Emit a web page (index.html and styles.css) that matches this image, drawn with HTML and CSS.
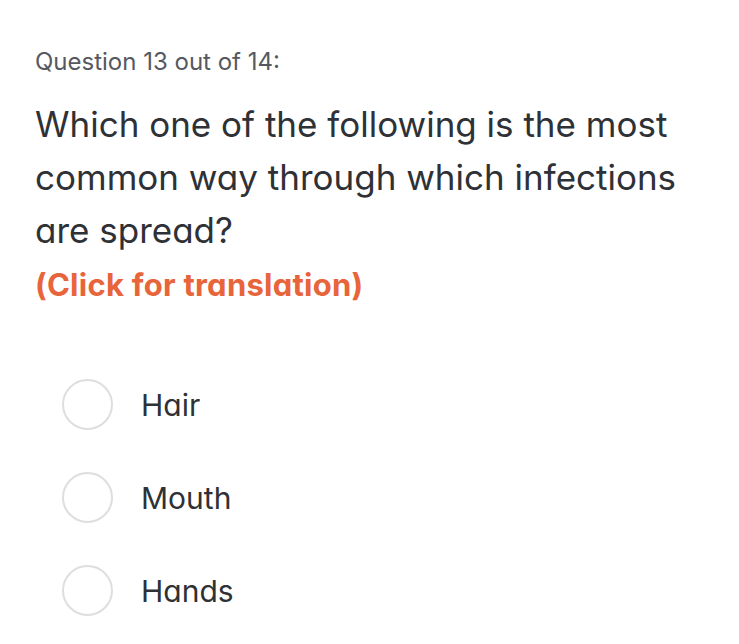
FILE: index.html
```html
<!DOCTYPE html>
<html>
<head>
<meta charset="utf-8">
<link rel="stylesheet" href="styles.css">
</head>
<body>
<main class="quiz">
  <div class="counter">Question 13 out of 14:</div>
  <h1 class="question">Which one of the following is the most common way through which infections are spread?</h1>
  <div class="translate">(Click for translation)</div>
  <ul class="options">
    <li class="option"><span class="radio"></span><span class="label">Hair</span></li>
    <li class="option"><span class="radio"></span><span class="label">Mouth</span></li>
    <li class="option"><span class="radio"></span><span class="label">Hands</span></li>
  </ul>
</main>
</body>
</html>
```

FILE: styles.css
```css
html, body {
  margin: 0;
  padding: 0;
  background: #ffffff;
}
body {
  font-family: Inter, "Noto Sans", sans-serif;
  font-feature-settings: "cv11" 1;
  color: #2e3136;
}
.quiz {
  padding: 44px 0 0 35px;
  width: 650px;
}
.counter {
  font-size: 24px;
  line-height: 36px;
  color: #55595f;
}
.question {
  margin: 18px 0 0 0;
  font-size: 35px;
  font-weight: 400;
  line-height: 53px;
  color: #2e3136;
}
.translate {
  margin-top: 8px;
  font-size: 31px;
  font-weight: 700;
  letter-spacing: 0.25px;
  line-height: 40px;
  color: #e8643a;
}
.options {
  list-style: none;
  margin: 74px 0 0 0;
  padding: 0 0 0 27px;
  display: flex;
  flex-direction: column;
  gap: 42px;
}
.option {
  display: flex;
  align-items: center;
  gap: 28px;
}
.radio {
  width: 47px;
  height: 47px;
  border: 2px solid #dedede;
  border-radius: 50%;
  flex: none;
}
.label {
  font-size: 30px;
  line-height: 40px;
  color: #2e3136;
}
```
